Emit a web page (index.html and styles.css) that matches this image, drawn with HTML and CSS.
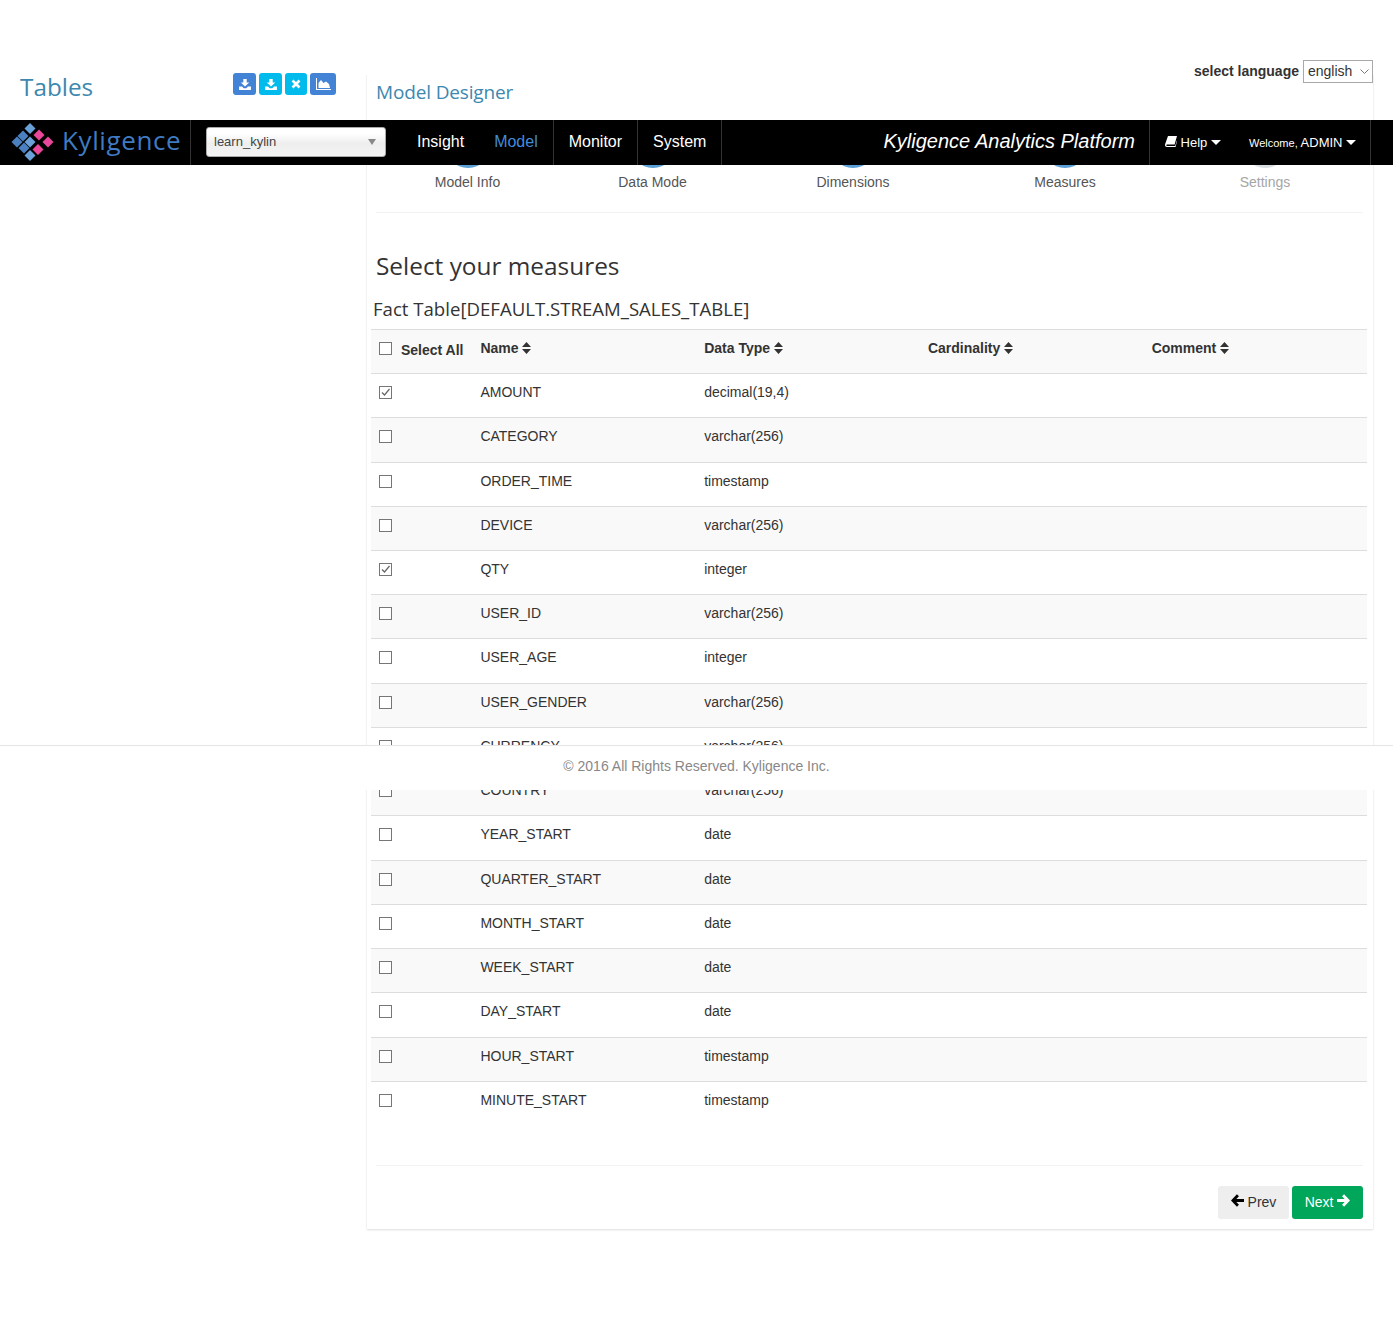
FILE: index.html
```html
<!DOCTYPE html>
<html lang="en">
<head>
    <meta charset="utf-8">
    <title>Model Designer</title>
    <link rel="stylesheet" href="styles.css">
</head>
<body>

<div class="lang-bar">
    <label class="lang-label">select language</label>
    <div class="lang-wrap">
        <select class="lang-select"><option>english</option></select>
        <svg class="lang-chevron" width="9" height="5" viewBox="0 0 9 5"><path fill="none" stroke="#777" d="M0.5 0.5L4.5 4.5 8.5 0.5"/></svg>
    </div>
</div>

<nav class="navbar">
    <div class="brand">
        <svg class="logo" width="44" height="40" viewBox="0 0 44 40">
            <polygon fill="#6aa0d8" points="19,0 24.5,5.5 19,11 13.5,5.5"/>
            <polygon fill="#4a80c0" points="12,7.5 17.5,13 12,18.5 6.5,13"/>
            <polygon fill="#4a80c0" points="6,13.5 11.5,19 6,24.5 0.5,19"/>
            <polygon fill="#6aa0d8" points="19,13.5 24.5,19 19,24.5 13.5,19"/>
            <polygon fill="#4a80c0" points="13,19.5 18.5,25 13,30.5 7.5,25"/>
            <polygon fill="#6aa0d8" points="19,27 24.5,32.5 19,38 13.5,32.5"/>
            <polygon fill="#e8479a" points="28,6.5 33.5,12 28,17.5 22.5,12"/>
            <polygon fill="#e8479a" points="37,13.5 42.5,19 37,24.5 31.5,19"/>
            <polygon fill="#e8479a" points="27,21 32.5,26.5 27,32 21.5,26.5"/>
        </svg>
        <span class="brand-name">Kyligence</span>
    </div>
    <div class="project-cell">
        <div class="project-select">
            <span>learn_kylin</span>
            <i class="project-arrow"></i>
        </div>
    </div>
    <ul class="nav-menu">
        <li class="nav-item nav-first"><a>Insight</a></li>
        <li class="nav-item nav-active"><a>Model</a></li>
        <li class="nav-item"><a>Monitor</a></li>
        <li class="nav-item"><a>System</a></li>
    </ul>
    <div class="nav-title">Kyligence Analytics Platform</div>
    <div class="nav-right">
        <a class="nav-help">
            <svg class="book" width="12" height="11" viewBox="0 0 12 11"><path fill="#fff" d="M3 0H12L9.6 8.6H2.2C1.6 8.6 1.2 9 1.4 9.4 1.5 9.8 2 10 2.4 10H10.2L11.8 4.4 12 5 10.6 11H2C0.8 11 0 10 0 9 0 8.7 0.1 8.4 0.2 8.1Z"/></svg>
            Help <i class="caret"></i>
        </a>
        <a class="nav-user"><small>Welcome,</small> ADMIN <i class="caret"></i></a>
    </div>
</nav>

<div class="page">
    <aside class="sidebar">
        <h3 class="sidebar-title">Tables</h3>
        <div class="toolbar">
            <button class="tool tool-blue">
                <svg width="12" height="11" viewBox="0 0 14 13"><path fill="#fff" d="M5 0H9V4H12L7 9 2 4H5ZM0 9H3.5L5.5 11H8.5L10.5 9H14V13H0Z"/></svg>
            </button>
            <button class="tool tool-cyan">
                <svg width="12" height="11" viewBox="0 0 14 13"><path fill="#fff" d="M5 0H9V4H12L7 9 2 4H5ZM0 9H3.5L5.5 11H8.5L10.5 9H14V13H0Z"/></svg>
            </button>
            <button class="tool tool-cyan tool-small">
                <svg width="10" height="10" viewBox="0 0 10 10"><path stroke="#fff" stroke-width="2.6" d="M1.5 1.5L8.5 8.5M8.5 1.5L1.5 8.5"/></svg>
            </button>
            <button class="tool tool-blue tool-wide">
                <svg width="15" height="12" viewBox="0 0 15 12"><path fill="#fff" d="M0 0H1V11H15V12H0ZM2.5 10V5L5 2 7.5 5 10 3.5 13 6 14 10Z"/></svg>
            </button>
        </div>
    </aside>

    <main class="panel">
        <h3 class="panel-title">Model Designer</h3>

        <div class="steps">
            <div class="step"><b class="dot"></b><span>Model Info</span></div>
            <div class="step"><b class="dot"></b><span>Data Mode</span></div>
            <div class="step"><b class="dot"></b><span>Dimensions</span></div>
            <div class="step"><b class="dot"></b><span>Measures</span></div>
            <div class="step step-off"><b class="dot"></b><span>Settings</span></div>
        </div>

        <h2 class="form-title">Select your measures</h2>
        <h4 class="table-title">Fact Table[DEFAULT.STREAM_SALES_TABLE]</h4>

        <table class="measures">
            <thead>
                <tr>
                    <th class="col-check"><i class="check"></i><span class="select-all">Select All</span></th>
                    <th class="col-wide">Name <svg class="sort" width="9" height="12" viewBox="0 0 9 12"><path fill="#333" d="M4.5 0L9 5H0ZM0 7H9L4.5 12Z"/></svg></th>
                    <th class="col-wide">Data Type <svg class="sort" width="9" height="12" viewBox="0 0 9 12"><path fill="#333" d="M4.5 0L9 5H0ZM0 7H9L4.5 12Z"/></svg></th>
                    <th class="col-wide">Cardinality <svg class="sort" width="9" height="12" viewBox="0 0 9 12"><path fill="#333" d="M4.5 0L9 5H0ZM0 7H9L4.5 12Z"/></svg></th>
                    <th class="col-wide">Comment <svg class="sort" width="9" height="12" viewBox="0 0 9 12"><path fill="#333" d="M4.5 0L9 5H0ZM0 7H9L4.5 12Z"/></svg></th>
                </tr>
            </thead>
            <tbody>
                <tr><td><i class="check"><svg width="11" height="11" viewBox="0 0 11 11"><path fill="none" stroke="#666" stroke-width="1.2" d="M2 5.5L4.5 8 9.5 2"/></svg></i></td><td>AMOUNT</td><td>decimal(19,4)</td><td></td><td></td></tr>
                <tr><td><i class="check"></i></td><td>CATEGORY</td><td>varchar(256)</td><td></td><td></td></tr>
                <tr><td><i class="check"></i></td><td>ORDER_TIME</td><td>timestamp</td><td></td><td></td></tr>
                <tr><td><i class="check"></i></td><td>DEVICE</td><td>varchar(256)</td><td></td><td></td></tr>
                <tr><td><i class="check"><svg width="11" height="11" viewBox="0 0 11 11"><path fill="none" stroke="#666" stroke-width="1.2" d="M2 5.5L4.5 8 9.5 2"/></svg></i></td><td>QTY</td><td>integer</td><td></td><td></td></tr>
                <tr><td><i class="check"></i></td><td>USER_ID</td><td>varchar(256)</td><td></td><td></td></tr>
                <tr><td><i class="check"></i></td><td>USER_AGE</td><td>integer</td><td></td><td></td></tr>
                <tr><td><i class="check"></i></td><td>USER_GENDER</td><td>varchar(256)</td><td></td><td></td></tr>
                <tr><td><i class="check"></i></td><td>CURRENCY</td><td>varchar(256)</td><td></td><td></td></tr>
                <tr><td><i class="check"></i></td><td>COUNTRY</td><td>varchar(256)</td><td></td><td></td></tr>
                <tr><td><i class="check"></i></td><td>YEAR_START</td><td>date</td><td></td><td></td></tr>
                <tr><td><i class="check"></i></td><td>QUARTER_START</td><td>date</td><td></td><td></td></tr>
                <tr><td><i class="check"></i></td><td>MONTH_START</td><td>date</td><td></td><td></td></tr>
                <tr><td><i class="check"></i></td><td>WEEK_START</td><td>date</td><td></td><td></td></tr>
                <tr><td><i class="check"></i></td><td>DAY_START</td><td>date</td><td></td><td></td></tr>
                <tr><td><i class="check"></i></td><td>HOUR_START</td><td>timestamp</td><td></td><td></td></tr>
                <tr><td><i class="check"></i></td><td>MINUTE_START</td><td>timestamp</td><td></td><td></td></tr>
            </tbody>
        </table>

        <div class="form-actions">
            <button class="btn btn-prev">
                <svg width="13" height="13" viewBox="0 0 12 12"><path fill="none" stroke="#000" stroke-width="2.6" d="M6.4 1.2L1.8 6 6.4 10.8M2 6H12"/></svg>
                Prev
            </button>
            <button class="btn btn-next">
                Next
                <svg width="13" height="13" viewBox="0 0 12 12"><path fill="none" stroke="#fff" stroke-width="2.6" d="M5.6 1.2L10.2 6 5.6 10.8M10 6H0"/></svg>
            </button>
        </div>
    </main>
</div>

<footer class="footer">© 2016 All Rights Reserved. Kyligence Inc.</footer>

</body>
</html>
```

FILE: styles.css
```css
html, body { margin: 0; padding: 0; }
body {
    position: relative;
    font-family: "Liberation Sans", Arial, sans-serif;
    font-size: 14px;
    line-height: 20px;
    color: #333;
    background: #fff;
    min-height: 1318px;
}

/* language picker, top right */
.lang-bar {
    height: 70px;
    padding: 60px 20px 0 0;
    box-sizing: border-box;
    display: flex;
    justify-content: flex-end;
    align-items: flex-start;
    position: relative;
    z-index: 2;
}
.lang-label { font-weight: bold; margin-right: 4px; line-height: 23px; }
.lang-wrap { position: relative; width: 70px; height: 23px; }
.lang-select {
    appearance: none;
    display: block;
    width: 70px;
    height: 23px;
    box-sizing: border-box;
    font-family: "Liberation Sans", Arial, sans-serif;
    font-size: 14px;
    color: #333;
    background: #fff;
    border: 1px solid #a9a9a9;
    border-radius: 0;
    padding: 0 0 2px 4px;
}
.lang-chevron { position: absolute; top: 9px; right: 4px; }

/* top bar sits over the page */
.navbar {
    position: absolute;
    top: 120px;
    left: 0;
    right: 0;
    height: 45px;
    background: #000;
    display: flex;
    align-items: stretch;
    z-index: 5;
    color: #fff;
}
.brand {
    width: 191px;
    border-right: 1px solid #333;
    display: flex;
    align-items: center;
    padding-left: 11px;
    box-sizing: border-box;
    flex: none;
}
.logo { flex: none; margin-right: 7px; }
.brand-name {
    font-family: "Open Sans", sans-serif;
    font-size: 26px;
    color: #3f7ac2;
    letter-spacing: 0.6px;
    padding-bottom: 6px;
}
.project-cell {
    width: 211px;
    flex: none;
    padding: 7px 0 0 15px;
    box-sizing: border-box;
}
.project-select {
    width: 180px;
    height: 30px;
    box-sizing: border-box;
    border: 1px solid #aaa;
    border-radius: 3px;
    background: linear-gradient(#fff 20%, #eee 55%, #f4f4f4);
    color: #444;
    padding: 0 8px 0 7px;
    line-height: 28px;
    font-size: 13px;
    display: flex;
    justify-content: space-between;
    align-items: center;
}
.project-arrow {
    width: 0;
    height: 0;
    border: 4px solid transparent;
    border-top: 6px solid #888;
    border-bottom: 0;
    margin-right: 1px;
}
.nav-menu { list-style: none; margin: 0; padding: 0; display: flex; flex: none; }
.nav-item {
    font-size: 16px;
    line-height: 43px;
    padding: 0 15px;
    border-right: 1px solid #333;
}
.nav-first { border-right: 0; }
.nav-active { color: #428bdc; }
.nav-title {
    flex: 1;
    text-align: right;
    font-size: 20px;
    font-style: italic;
    line-height: 42px;
    padding-right: 14px;
    border-right: 1px solid #333;
}
.nav-right {
    width: 221px;
    flex: none;
    display: flex;
    align-items: center;
    padding-left: 15px;
    box-sizing: border-box;
    border-right: 1px solid #333;
    margin-right: 22px;
    line-height: 44px;
    font-size: 13px;
}
.nav-help { width: 84px; flex: none; white-space: nowrap; }
.nav-user { white-space: nowrap; }
.nav-user small { font-size: 11px; }
.caret {
    display: inline-block;
    width: 0;
    height: 0;
    border: 5px solid transparent;
    border-top: 5px solid #fff;
    border-bottom: 0;
    vertical-align: 2px;
}

.page { display: flex; align-items: flex-start; }

.sidebar {
    width: 366px;
    flex: none;
    box-sizing: border-box;
    padding: 3px 30px 0 20px;
    display: flex;
    justify-content: space-between;
    align-items: flex-start;
}
.sidebar-title {
    margin: 0;
    font-family: "Open Sans", sans-serif;
    font-weight: normal;
    font-size: 24.3px;
    line-height: 28px;
    color: #3d88ae;
}
.toolbar { display: flex; gap: 3px; }
.tool {
    height: 22px;
    width: 23px;
    border: 0;
    border-radius: 3px;
    padding: 0;
    display: flex;
    align-items: center;
    justify-content: center;
}
.tool-blue { background: #4383d6; }
.tool-cyan { background: #00bbec; }
.tool-small { width: 22px; }
.tool-wide { width: 26px; }

.panel {
    width: 1008px;
    flex: none;
    box-sizing: border-box;
    margin-top: 5px;
    padding: 0 7px 10px 9px;
    border-left: 1px solid #f2f2f2;
    border-right: 1px solid #f2f2f2;
    box-shadow: 0 2px 2px -1px #ddd;
    height: 1154px;
}
.panel-title {
    margin: 0 0 13px 0;
    font-family: "Open Sans", sans-serif;
    font-weight: normal;
    font-size: 19px;
    letter-spacing: -0.15px;
    line-height: 34px;
    color: #3d88ae;
}
.steps {
    display: grid;
    grid-template-columns: 183px 187px 214px 210px 190px;
    border-bottom: 1px solid #f2f2f2;
    padding-bottom: 20px;
    margin-right: 3px;
    text-align: center;
    color: #555;
}
.step span { display: block; margin-top: 4px; }
.dot {
    display: block;
    width: 46px;
    height: 46px;
    margin: 0 auto;
    border-radius: 50%;
    background: #5a9fd6;
}
.step-off { color: #a5a5a5; }
.step-off .dot { background: #d8dde0; }

.form-title {
    margin: 35px 0 0 0;
    font-family: "Open Sans", sans-serif;
    font-weight: normal;
    font-size: 24.4px;
    line-height: 36px;
    color: #333;
}
.table-title {
    margin: 11px 0 6px -3px;
    font-family: "Open Sans", sans-serif;
    font-weight: normal;
    font-size: 18.6px;
    line-height: 28px;
    color: #333;
}

.measures {
    width: 996.4px;
    margin-left: -5px;
    border-collapse: separate;
    border-spacing: 0;
    table-layout: fixed;
}
.measures th, .measures td {
    box-sizing: border-box;
    padding: 8px;
    text-align: left;
    vertical-align: top;
    border-top: 1px solid #ddd;
    line-height: 20px;
}
.measures td { height: 44.24px; }
.measures th { height: 44.05px; background: #f9f9f9; }
.measures tbody tr:nth-child(even) td { background: #f9f9f9; }
.col-check { width: 101.4px; white-space: nowrap; }
.col-wide { width: 223.75px; }
.select-all { position: relative; top: 2px; margin-left: 9px; }
.sort { vertical-align: -1px; }
.check {
    display: inline-block;
    width: 13px;
    height: 13px;
    box-sizing: border-box;
    border: 1px solid #767676;
    background: #fff;
    margin-top: 4px;
    vertical-align: top;
}
.check svg { display: block; }

.form-actions {
    margin-top: 40px;
    margin-right: 3px;
    border-top: 1px solid #f2f2f2;
    padding-top: 20px;
    display: flex;
    justify-content: flex-end;
    gap: 3px;
}
.btn {
    height: 33px;
    width: 71px;
    border: 0;
    border-radius: 3px;
    font-family: "Liberation Sans", Arial, sans-serif;
    font-size: 14px;
    padding: 0 0 2px 0;
}
.btn-prev { background: #eee; color: #333; }
.btn-next { background: #00a65a; color: #fff; }

/* footer is stuck over the table, like in the app */
.footer {
    position: absolute;
    top: 745px;
    left: 0;
    right: 0;
    height: 45px;
    box-sizing: border-box;
    border-top: 1px solid #e5e5e5;
    background: #fff;
    text-align: center;
    line-height: 41px;
    color: #888;
    z-index: 4;
}
```
